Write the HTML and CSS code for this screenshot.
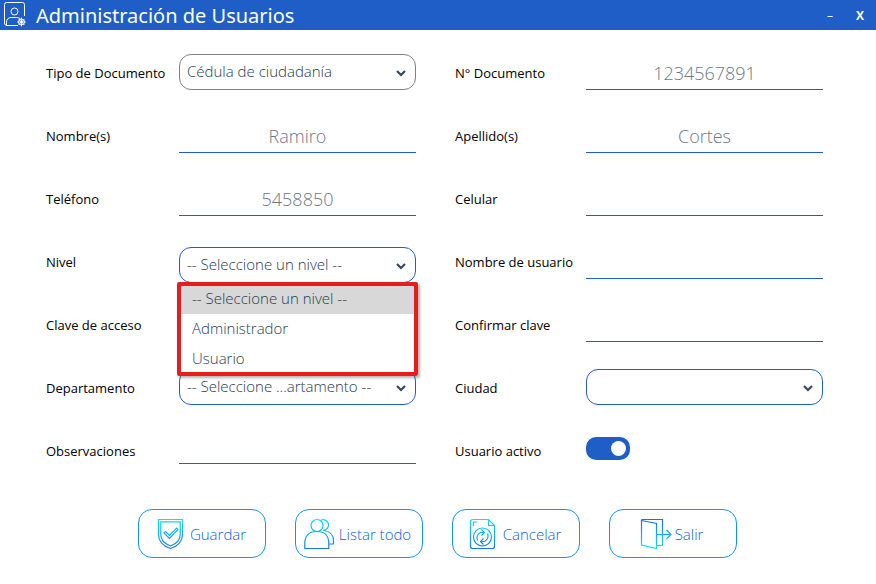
FILE: index.html
```html
<!DOCTYPE html>
<html lang="es">
<head>
<meta charset="utf-8">
<meta name="viewport" content="width=device-width, initial-scale=1">
<title>Administración de Usuarios</title>
<link rel="stylesheet" href="styles.css">
</head>
<body>
<svg class="defs" aria-hidden="true">
  <defs>
    <linearGradient id="aqua" gradientUnits="userSpaceOnUse" x1="0" y1="0" x2="0" y2="32">
      <stop offset="0" stop-color="#0ee6e6"/><stop offset="1" stop-color="#1673ee"/>
    </linearGradient>
    <linearGradient id="aqua-up" gradientUnits="userSpaceOnUse" x1="0" y1="0" x2="0" y2="32">
      <stop offset="0" stop-color="#1669ee"/><stop offset="1" stop-color="#0ee6ee"/>
    </linearGradient>
    <symbol id="chevron" viewBox="0 0 10 8"><path d="M1 2l4 4 4-4" fill="none" stroke="#34495e" stroke-width="2.200"/></symbol>
  </defs>
</svg>
<header class="titlebar">
  <svg class="titlebar-icon" viewBox="0 0 24 26" fill="none" stroke="#fff" aria-hidden="true">
    <path d="M20.500 14V2.500Q20.500 .5 18.500 .5H2.500Q.5 .5 .5 2.500v18.500q0 2.500 2.500 2.500h11"/>
    <circle cx="10.500" cy="9.500" r="3.500"/>
    <path d="M2.500 23v-2.500q0-5 5-5h5q2.500 0 4 1.500"/>
    <circle cx="17.500" cy="20" r="3"/><circle cx="17.500" cy="20" r="1"/>
    <path d="M17.500 15.500v9M13 20h9M14.500 17l6 6M20.500 17l-6 6" stroke-width=".8"/>
  </svg>
  <h1>Administración de Usuarios</h1>
  <button class="window-button minimize" type="button" aria-label="Minimizar">–</button>
  <button class="window-button" type="button" aria-label="Cerrar">X</button>
</header>
<main>
<form>
  <div class="fields">
    <div class="field">
      <label for="tipo">Tipo de Documento</label>
      <div class="select select-muted"><select id="tipo"><option>Cédula de ciudadanía</option></select><svg class="arrow" aria-hidden="true"><use href="#chevron"/></svg></div>
    </div>
    <div class="field field-right">
      <label for="documento">N° Documento</label>
      <input class="line" id="documento" type="text" value="1234567891">
    </div>
    <div class="field">
      <label for="nombre">Nombre(s)</label>
      <input class="line" id="nombre" type="text" value="Ramiro">
    </div>
    <div class="field field-right">
      <label for="apellido">Apellido(s)</label>
      <input class="line" id="apellido" type="text" value="Cortes">
    </div>
    <div class="field">
      <label for="telefono">Teléfono</label>
      <input class="line" id="telefono" type="text" value="5458850">
    </div>
    <div class="field field-right">
      <label for="celular">Celular</label>
      <input class="line" id="celular" type="text">
    </div>
    <div class="field">
      <label for="nivel">Nivel</label>
      <div class="select select-open">
        <select id="nivel"><option>-- Seleccione un nivel --</option></select><svg class="arrow" aria-hidden="true"><use href="#chevron"/></svg>
        <ul class="menu" role="listbox" aria-label="Nivel">
          <li role="option" aria-selected="true">-- Seleccione un nivel --</li>
          <li role="option" aria-selected="false">Administrador</li>
          <li role="option" aria-selected="false">Usuario</li>
        </ul>
      </div>
    </div>
    <div class="field field-right">
      <label for="usuario">Nombre de usuario</label>
      <input class="line" id="usuario" type="text">
    </div>
    <div class="field">
      <label for="clave">Clave de acceso</label>
      <input class="line" id="clave" type="password">
    </div>
    <div class="field field-right">
      <label for="confirmar">Confirmar clave</label>
      <input class="line" id="confirmar" type="password">
    </div>
    <div class="field">
      <label for="departamento">Departamento</label>
      <div class="select"><select id="departamento"><option>-- Seleccione ...artamento --</option></select><svg class="arrow" aria-hidden="true"><use href="#chevron"/></svg></div>
    </div>
    <div class="field field-right">
      <label for="ciudad">Ciudad</label>
      <div class="select"><select id="ciudad"><option></option></select><svg class="arrow" aria-hidden="true"><use href="#chevron"/></svg></div>
    </div>
    <div class="field field-compact">
      <label for="observaciones">Observaciones</label>
      <input class="line" id="observaciones" type="text">
    </div>
    <div class="field field-right field-compact">
      <label for="activo">Usuario activo</label>
      <input class="toggle" id="activo" type="checkbox" role="switch" checked>
    </div>
  </div>
  <div class="actions">
    <button type="button">
      <svg class="icon" viewBox="0 0 32 32" fill="none" stroke="url(#aqua)" stroke-width="1.200" aria-hidden="true">
        <path d="M3.500 1.500h24v15q0 10-12 14-12-4-12-14z"/>
        <path d="M5.800 3.800h19.400v12.700q0 8-9.700 11.500-9.700-3.500-9.700-11.500z"/>
        <path d="M9 15l1.500-1.500 4 4 7-7.500 1.500 1.500-8.500 9z"/>
      </svg>
      Guardar
    </button>
    <button type="button">
      <svg class="icon" viewBox="0 0 32 32" fill="none" stroke="url(#aqua)" stroke-width="1.200" aria-hidden="true">
        <circle cx="13" cy="7.500" r="6"/>
        <path d="M.8 30.500v-5q0-12 12-12t12 12v5z"/>
        <path d="M16.500 2.500a5.300 5.300 0 1 1 2.500 9.800M20 12.500q9.500 1.500 9.500 10V26H25"/>
      </svg>
      Listar todo
    </button>
    <button type="button">
      <svg class="icon" viewBox="0 0 32 32" fill="none" stroke="url(#aqua)" stroke-width="1.200" aria-hidden="true">
        <path d="M5.500 1.500h15l6 6v21q0 2-2 2h-20q-2 0-2-2v-25q0-2 3-2zM20.500 1.500v6h6M5.500 8V4h4"/>
        <circle cx="14.500" cy="19" r="9"/>
        <path d="M9.500 22.500a6 6 0 0 1 3-8h4M13.500 11.500l3 3-3 3M19.500 15.500a6 6 0 0 1-3 8h-4M15.500 20.500l-3 3 3 3"/>
      </svg>
      Cancelar
    </button>
    <button type="button">
      <svg class="icon" viewBox="0 0 32 32" fill="none" stroke="url(#aqua-up)" stroke-width="1.200" aria-hidden="true">
        <path d="M1.500 2.500q0-1 1-1h20v7M22.500 21v6.500H16.500"/>
        <path d="M22.500 8v14" />
        <path d="M1.500 2.500l15 3v25l-15-3.500z"/>
        <path d="M16.500 16.500h14M26.500 12l4.500 4.500-4.500 4.500"/>
      </svg>
      Salir
    </button>
  </div>
</form>
</main>
</body>
</html>
```
FILE: styles.css
```css
* { box-sizing: border-box; }

body {
  margin: 0;
  background: #fff;
  color: #000;
  font-family: "Open Sans", "Noto Sans", sans-serif;
  font-size: 13px;
}

button, input, select { font: inherit; }

.defs { position: absolute; width: 0; height: 0; }

.titlebar {
  display: flex;
  align-items: center;
  height: 30px;
  padding: 0 4px;
  background: #1f5ec6;
  color: #fff;
}

.titlebar-icon { width: 24px; height: 26px; margin-right: 8px; }

h1 {
  flex: 1;
  margin: 0;
  padding-top: 2px;
  font-family: "Noto Sans", sans-serif;
  font-size: 20px;
  font-weight: 400;
  line-height: 28px;
}

.window-button {
  width: 24px;
  height: 30px;
  padding: 0;
  border: 0;
  background: none;
  color: #fff;
  font-size: 12px;
  font-weight: 700;
}

.minimize { margin-right: 6px; font-weight: 400; }

.fields {
  display: grid;
  grid-template-columns: 133px 1fr 39px 131px 1fr;
  grid-auto-rows: 36px;
  row-gap: 27px;
  padding: 24px 53px 0 46px;
}

.field {
  display: grid;
  grid-column: 1 / span 2;
  grid-template-columns: subgrid;
  align-items: center;
}

.field-right { grid-column: 4 / span 2; }

.field label { padding-top: 2px; line-height: 20px; }

.field-compact { height: 32px; }

.field-compact label { padding-top: 6px; }

.line {
  width: 100%;
  height: 100%;
  min-width: 0;
  padding: 2px 0 0;
  border: 0;
  border-bottom: 1px solid #1f5ec6;
  background: none;
  color: #6c7987;
  font-size: 18px;
  font-weight: 300;
  text-align: center;
  outline: 0;
}

.select { position: relative; height: 36px; }

.select-open { top: 4px; }

.select select {
  appearance: none;
  width: 100%;
  height: 100%;
  padding: 0 32px 2px 7px;
  border: 1px solid #1f5ec6;
  border-radius: 12px;
  background: #fff;
  color: #263b50;
  font-size: 15px;
  font-weight: 300;
}

.select-muted select { border-color: #808080; }

.arrow {
  position: absolute;
  top: 15px;
  right: 10px;
  width: 10px;
  height: 8px;
  pointer-events: none;
}

.menu {
  position: absolute;
  z-index: 1;
  top: 37px;
  left: 0;
  right: 0;
  margin: 0;
  padding: 0;
  background: #fff;
  color: #263b50;
  font-size: 15px;
  font-weight: 300;
  line-height: 28px;
  list-style: none;
}

.menu::after {
  content: "";
  position: absolute;
  inset: -2px;
  border: 4px solid #e81c1c;
  border-radius: 2px;
  box-shadow: 2px 2px 3px rgba(0, 0, 0, .3);
  pointer-events: none;
}

.menu li { height: 30px; padding-left: 13px; }

.menu li[aria-selected="true"] { background: #d8d8d8; }

.toggle {
  appearance: none;
  width: 44px;
  height: 23px;
  margin: 0;
  padding: 4px;
  border-radius: 10px;
  background: #1f5ec6;
}

.toggle::before {
  content: "";
  display: block;
  width: 15px;
  height: 15px;
  border-radius: 50%;
  background: #fff;
}

.toggle:checked::before { margin-left: auto; }

.actions {
  display: flex;
  justify-content: center;
  gap: 29px;
  padding: 41px 1px 24px 0;
}

.actions button {
  display: flex;
  align-items: center;
  justify-content: center;
  gap: 3px;
  width: 128px;
  height: 49px;
  padding: 0 3px 0 0;
  border: 1px solid #1296ee;
  border-radius: 14px;
  background: #fff;
  color: #0a62ea;
  font-size: 15px;
  font-weight: 300;
}

.icon { width: 32px; height: 32px; }
```
